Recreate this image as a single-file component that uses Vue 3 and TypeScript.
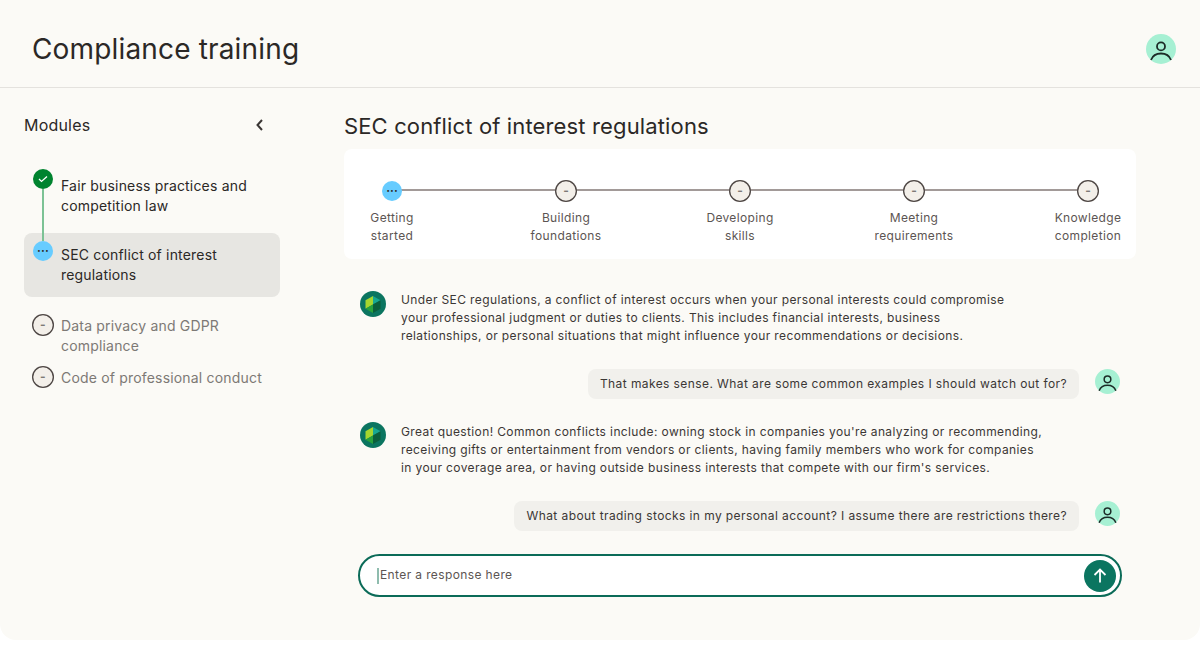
<template>
  <div class="page">
    <header class="topbar">
      <h1>Compliance training</h1>
      <span class="avatar large">
        <svg viewBox="0 0 30 30" width="30" height="30"><circle cx="15" cy="12.400" r="4" /><path d="M5 26c1.500-4 5-6.500 10-6.500s8.500 2.500 10 6.500" /></svg>
      </span>
    </header>
    <div class="body">
      <aside class="sidebar">
        <div class="side-head">
          <span>Modules</span>
          <svg class="chevron" viewBox="0 0 16 16" width="16" height="16"><path d="M10 3 5.500 8l4.500 5" /></svg>
        </div>
        <ul class="modules">
          <li v-for="m in modules" :key="m.title" class="module" :class="m.state">
            <span class="dot" :class="m.state">
              <svg v-if="m.state === 'done'" viewBox="0 0 20 20" width="20" height="20"><path d="m6 10 2.500 2.400 5.500-5" /></svg>
              <template v-else-if="m.state === 'active'">···</template>
              <template v-else>-</template>
            </span>
            <span class="module-title">{{ m.title }}</span>
          </li>
        </ul>
      </aside>
      <main class="content">
        <h2>SEC conflict of interest regulations</h2>
        <section class="stepper">
          <div v-for="(s, i) in steps" :key="s[0]" class="step">
            <span class="dot" :class="i === 0 ? 'active' : 'todo'">{{ i === 0 ? '···' : '-' }}</span>
            <span class="step-label">{{ s[0] }}<br />{{ s[1] }}</span>
          </div>
        </section>
        <section class="chat">
          <template v-for="(msg, i) in messages" :key="i">
            <div v-if="msg.bot" class="bot">
              <svg class="logo" viewBox="0 0 26 26" width="26" height="26">
                <circle cx="13" cy="13" r="13" fill="#0b7560" />
                <path d="M13 5 20.500 9.300 13 13.500Z" fill="#17a890" />
                <path d="M5.500 9.300 13 5v8.500l-7.500 4.200Z" fill="#a6d62e" />
                <path d="M20.500 9.300v8.400L13 22v-8.500Z" fill="#0a5f3c" />
                <path d="M5.500 17.700 13 13.500V22Z" fill="#27a23c" />
              </svg>
              <p>
                <template v-for="(line, j) in msg.lines" :key="j">{{ line }}<br /></template>
              </p>
            </div>
            <div v-else class="user">
              <p class="bubble">{{ msg.lines[0] }}</p>
              <span class="avatar">
                <svg viewBox="0 0 30 30" width="25" height="25"><circle cx="15" cy="12.400" r="4" /><path d="M5 26c1.500-4 5-6.500 10-6.500s8.500 2.500 10 6.500" /></svg>
              </span>
            </div>
          </template>
        </section>
        <div class="composer">
          <span class="caret"></span>
          <span class="placeholder">Enter a response here</span>
          <button class="send" type="button" aria-label="Send">
            <svg viewBox="0 0 20 20" width="20" height="20"><path d="M10 16.500v-13M4.500 9 10 3.500 15.500 9" /></svg>
          </button>
        </div>
      </main>
    </div>
  </div>
</template>

<script setup lang="ts">
const modules = [
  { title: 'Fair business practices and competition law', state: 'done' },
  { title: 'SEC conflict of interest regulations', state: 'active' },
  { title: 'Data privacy and GDPR compliance', state: 'todo' },
  { title: 'Code of professional conduct', state: 'todo' },
]

const steps = [
  ['Getting', 'started'],
  ['Building', 'foundations'],
  ['Developing', 'skills'],
  ['Meeting', 'requirements'],
  ['Knowledge', 'completion'],
]

const messages = [
  {
    bot: true,
    lines: [
      'Under SEC regulations, a conflict of interest occurs when your personal interests could compromise',
      'your professional judgment or duties to clients. This includes financial interests, business',
      'relationships, or personal situations that might influence your recommendations or decisions.',
    ],
  },
  { bot: false, lines: ['That makes sense. What are some common examples I should watch out for?'] },
  {
    bot: true,
    lines: [
      "Great question! Common conflicts include: owning stock in companies you're analyzing or recommending,",
      'receiving gifts or entertainment from vendors or clients, having family members who work for companies',
      "in your coverage area, or having outside business interests that compete with our firm's services.",
    ],
  },
  { bot: false, lines: ['What about trading stocks in my personal account? I assume there are restrictions there?'] },
]
</script>

<style>
html,
body {
  background: #fff;
}
</style>

<style scoped>
.page {
  width: 1200px;
  height: 640px;
  background: #fbfaf6;
  border-radius: 0 0 16px 16px;
  font-family: Inter, "Liberation Sans", sans-serif;
  color: #2b2826;
  overflow: hidden;
}

.topbar {
  height: 76px;
  padding: 11px 24px 0 32px;
  border-bottom: 1px solid #e4e2de;
  display: flex;
  align-items: center;
  justify-content: space-between;
}

h1 {
  margin: 0;
  font-size: 28px;
  font-weight: 400;
  letter-spacing: 0.16px;
}

.avatar {
  width: 25px;
  height: 25px;
  border-radius: 50%;
  background: #a6f0d3;
  display: block;
  flex: none;
}

.avatar.large {
  width: 30px;
  height: 30px;
}

.avatar svg {
  display: block;
  fill: none;
  stroke: #1c2b27;
  stroke-width: 1.800;
}

.body {
  display: flex;
}

.sidebar {
  width: 256px;
  padding: 27px 24px 0;
  flex: none;
}

.side-head {
  display: flex;
  align-items: center;
  justify-content: space-between;
  padding-right: 12px;
  font-size: 16px;
  line-height: 20px;
  letter-spacing: 0.2px;
}

.chevron {
  fill: none;
  stroke: #3a3634;
  stroke-width: 2;
}

.modules {
  list-style: none;
  margin: 31px 0 0;
  padding: 0;
  width: 256px;
}

.module {
  display: flex;
  gap: 8px;
  padding: 10px 8px 0;
  font-size: 14px;
  line-height: 20px;
  letter-spacing: 0.18px;
  position: relative;
}

.module.done {
  padding-bottom: 17px;
}

.module.done::after {
  content: "";
  position: absolute;
  z-index: 1;
  left: 18px;
  top: 23px;
  height: 52px;
  width: 2px;
  background: #7cc295;
}

.module.active {
  background: #e7e6e2;
  border-radius: 8px;
  padding: 12px 8px 12px 37px;
}

.module.active .dot {
  position: absolute;
  left: 9px;
  top: 8px;
}

.module.todo {
  color: #7d7975;
  padding-top: 0;
  gap: 7px;
}

.module.active + .module.todo {
  margin-top: 19px;
}

.module.todo + .module.todo {
  margin-top: 12px;
}

.module.todo .dot {
  margin-top: -2px;
}

.module-title {
  flex: 1;
}

.module.done .dot {
  margin-top: -7px;
  margin-left: 1px;
}

.dot {
  width: 20px;
  height: 20px;
  border-radius: 50%;
  display: flex;
  align-items: center;
  justify-content: center;
  font-size: 12px;
  line-height: 1;
  box-sizing: border-box;
  flex: none;
  position: relative;
  z-index: 2;
}

.dot svg {
  fill: none;
  stroke: #fff;
  stroke-width: 1.300;
}

.dot.done {
  background: #00832f;
}

.dot.active {
  background: #67ccff;
  color: #2b2826;
  font-weight: 600;
}

.dot.todo {
  width: 22px;
  height: 22px;
  background: #f3efe9;
  box-shadow: inset 0 0 0 1.300px #4d4644;
  color: #7d7975;
  font-weight: 700;
}

.step .dot.todo {
  margin: -1px 0;
}

.content {
  width: 792px;
  margin-left: 40px;
  flex: none;
}

h2 {
  margin: 24px 0 0;
  font-size: 22px;
  font-weight: 400;
  line-height: 28px;
  letter-spacing: 0.14px;
}

.stepper {
  margin-top: 9px;
  height: 110px;
  background: #fff;
  border-radius: 8px;
  padding: 32px 48px 0;
  box-sizing: border-box;
  display: flex;
  justify-content: space-between;
  position: relative;
}

.stepper::before {
  content: "";
  position: absolute;
  left: 48px;
  right: 48px;
  top: 40px;
  height: 2px;
  background: #a29a98;
}

.step {
  width: 0;
  display: flex;
  flex-direction: column;
  align-items: center;
}

.step-label {
  flex: none;
  margin-top: 8px;
  white-space: nowrap;
  text-align: center;
  font-size: 12px;
  line-height: 18px;
  color: #5c5553;
  letter-spacing: 0.35px;
}

.chat {
  margin-top: 32px;
  padding: 0 16px;
  display: flex;
  flex-direction: column;
  font-size: 12px;
  line-height: 18px;
  letter-spacing: 0.38px;
  color: #3b3735;
}

.bot {
  display: flex;
  gap: 15px;
  margin-bottom: 24px;
}

.bot p {
  margin: 0;
  white-space: nowrap;
}

.logo {
  flex: none;
}

.bot:nth-child(3) .logo {
  margin-top: -1px;
}

.user {
  display: flex;
  justify-content: flex-end;
  align-items: flex-start;
  gap: 16px;
  margin-bottom: 24px;
}

.user:last-child {
  margin-bottom: 0;
}

.bubble {
  margin: 0;
  background: #f1f0ec;
  border-radius: 8px;
  padding: 6px 12px;
  letter-spacing: 0.41px;
}

.composer {
  margin: 23px 14px 0;
  height: 43px;
  border: 2px solid #0b6b58;
  border-radius: 22px;
  background: #fff;
  box-sizing: border-box;
  display: flex;
  align-items: center;
  padding: 0 4px 0 17px;
}

.caret {
  width: 2px;
  height: 16px;
  background: #8fbcae;
  margin-right: 1px;
}

.placeholder {
  flex: 1;
  font-size: 12px;
  line-height: 14px;
  margin-top: -1px;
  letter-spacing: 0.38px;
  color: #5c5553;
}

.send {
  width: 32px;
  height: 32px;
  border-radius: 50%;
  border: 0;
  padding: 0;
  background: #0b7560;
  display: flex;
  align-items: center;
  justify-content: center;
}

.send svg {
  fill: none;
  stroke: #fff;
  stroke-width: 1.800;
}
</style>
